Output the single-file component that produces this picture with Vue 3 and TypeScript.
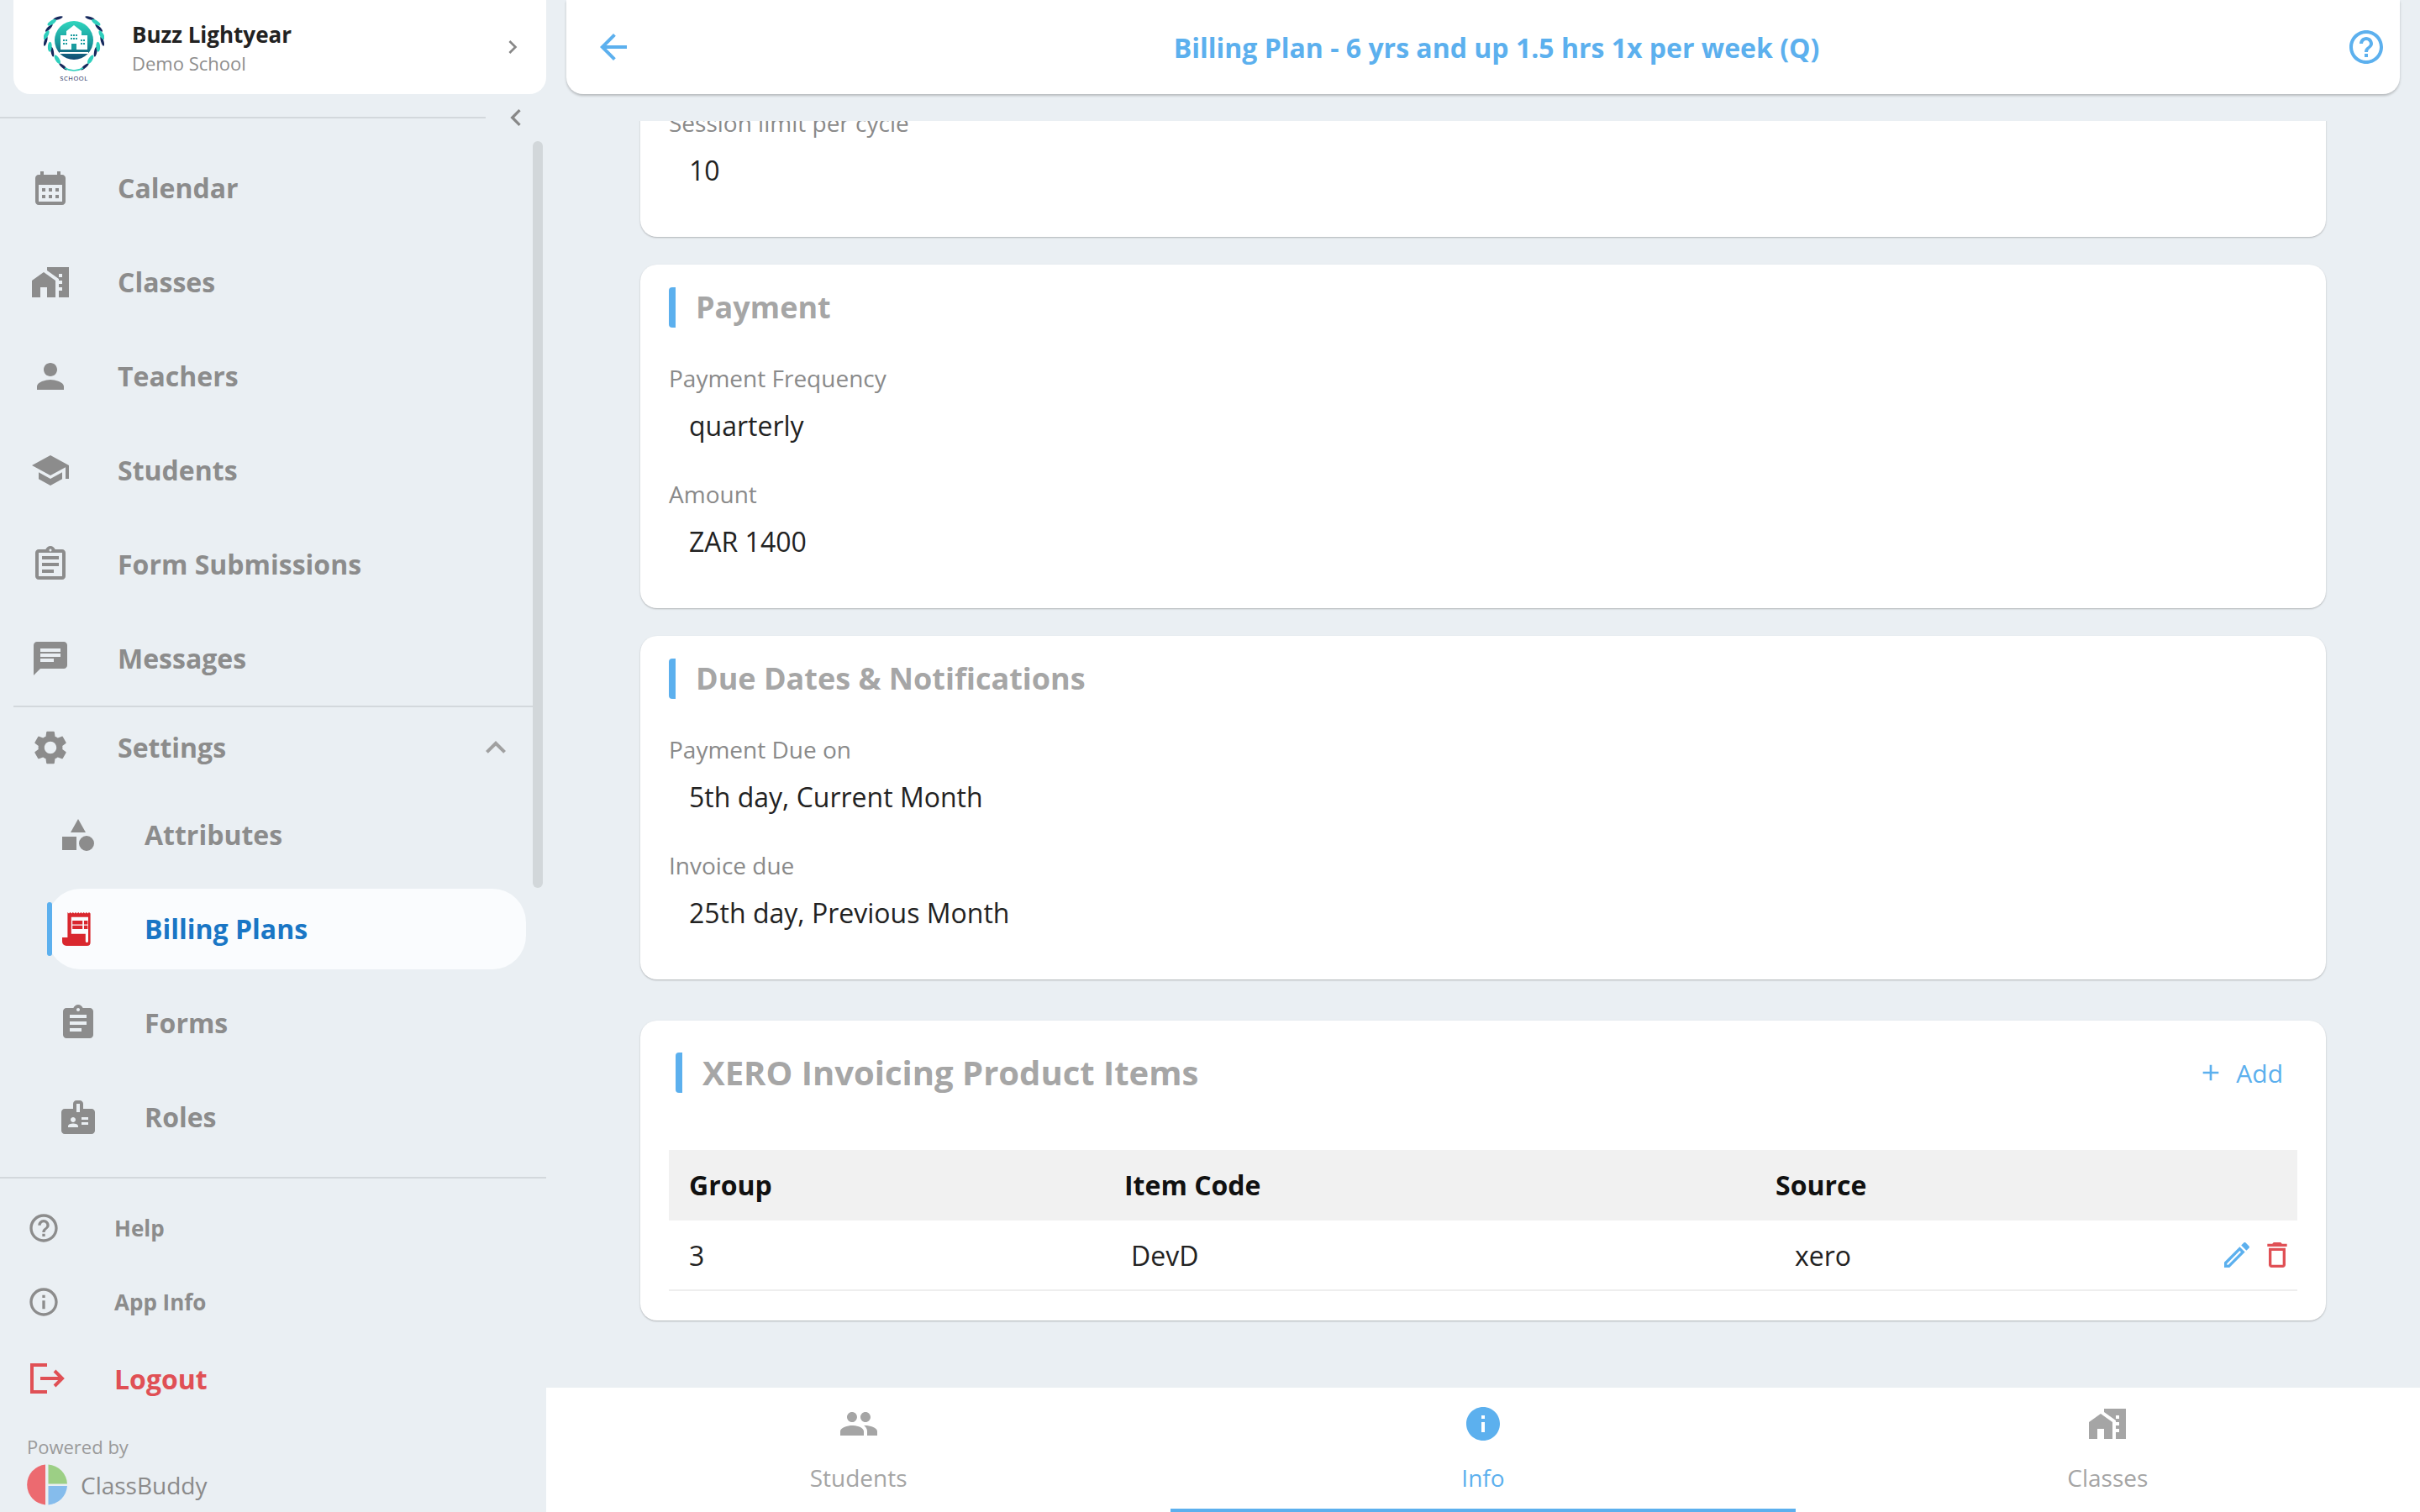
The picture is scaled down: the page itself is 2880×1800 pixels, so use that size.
<script setup lang="ts">
interface NavItem {
  label: string
  icon: string
  active?: boolean
}

const mainNav: NavItem[] = [
  { label: 'Calendar', icon: 'M19 4h-1V2h-2v2H8V2H6v2H5c-1.1 0-2 .9-2 2v14c0 1.1.9 2 2 2h14c1.1 0 2-.9 2-2V6c0-1.1-.9-2-2-2zm0 16H5V10h14v10zM9 14H7v-2h2v2zm4 0h-2v-2h2v2zm4 0h-2v-2h2v2zm-8 4H7v-2h2v2zm4 0h-2v-2h2v2zm4 0h-2v-2h2v2z' },
  { label: 'Classes', icon: 'M1 11v10h5v-6h4v6h5V11L8 6zM10 3v1.97l7 5V11h2v2h-2v2h2v2h-2v4h6V3H10zm9 6h-2V7h2v2z' },
  { label: 'Teachers', icon: 'M12 12c2.21 0 4-1.79 4-4s-1.79-4-4-4-4 1.79-4 4 1.79 4 4 4zm0 2c-2.67 0-8 1.34-8 4v2h16v-2c0-2.66-5.33-4-8-4z' },
  { label: 'Students', icon: 'M5 13.18v4L12 21l7-3.82v-4L12 17l-7-3.82zM12 3 1 9l11 6 9-4.91V17h2V9L12 3z' },
  { label: 'Form Submissions', icon: 'M19 3h-4.18C14.4 1.84 13.3 1 12 1s-2.4.84-2.82 2H5c-1.1 0-2 .9-2 2v14c0 1.1.9 2 2 2h14c1.1 0 2-.9 2-2V5c0-1.1-.9-2-2-2zm-7-.25c.41 0 .75.34.75.75s-.34.75-.75.75-.75-.34-.75-.75.34-.75.75-.75zM19 19H5V5h14v14zM7 15h7v2H7zM7 11h10v2H7zM7 7h10v2H7z' },
  { label: 'Messages', icon: 'M20 2H4c-1.1 0-1.99.9-1.99 2L2 22l4-4h14c1.1 0 2-.9 2-2V4c0-1.1-.9-2-2-2zM6 9h12v2H6V9zm8 5H6v-2h8v2zm4-6H6V6h12v2z' }
]

const settingsIcon = 'M19.14 12.94c.04-.3.06-.61.06-.94 0-.32-.02-.64-.07-.94l2.03-1.58c.18-.14.23-.41.12-.61l-1.92-3.32c-.12-.22-.37-.29-.59-.22l-2.39.96c-.5-.38-1.03-.7-1.62-.94l-.36-2.54c-.04-.24-.24-.41-.48-.41h-3.84c-.24 0-.43.17-.47.41l-.36 2.54c-.59.24-1.13.57-1.62.94l-2.39-.96c-.22-.08-.47 0-.59.22L2.74 8.87c-.12.21-.08.47.12.61l2.03 1.58c-.05.3-.09.63-.09.94s.02.64.07.94l-2.03 1.58c-.18.14-.23.41-.12.61l1.92 3.32c.12.22.37.29.59.22l2.39-.96c.5.38 1.03.7 1.62.94l.36 2.54c.05.24.24.41.48.41h3.84c.24 0 .44-.17.47-.41l.36-2.54c.59-.24 1.13-.56 1.62-.94l2.39.96c.22.08.47 0 .59-.22l1.92-3.32c.12-.22.07-.47-.12-.61l-2.01-1.58zM12 15.6c-1.98 0-3.6-1.62-3.6-3.6s1.62-3.6 3.6-3.6 3.6 1.62 3.6 3.6-1.62 3.6-3.6 3.6z'

const subNav: NavItem[] = [
  { label: 'Attributes', icon: 'M12 2.5 16.5 10.5H7.5zM2.5 13h8.5v8h-8.5zM17 12.5a4.5 4.5 0 1 0 0 9 4.5 4.5 0 0 0 0-9z' },
  {
    label: 'Billing Plans',
    active: true,
    icon: 'M5.7 2l.8.8.8-.8.8.8.8-.8.8.8.8-.8.8.8.8-.8.8.8.8-.8.8.8.8-.8.8.8.8-.8.8.8.8-.8.8.8V20a2 2 0 0 1-2 2H5a2.5 2.5 0 0 1-2.5-2.5V17h3.2zM7.9 4.9V14.9H16.4V19.2a.8.8 0 0 0 1.6 0V4.9zM8.6 7h6v2.3h-6zM15.5 7h2.2v2.3h-2.2zM8.6 9.9h6v2.1h-6zM15.5 9.9h2.2v2.1h-2.2z'
  },
  { label: 'Forms', icon: 'M19 3h-4.18C14.4 1.84 13.3 1 12 1c-1.3 0-2.4.84-2.82 2H5c-1.1 0-2 .9-2 2v14c0 1.1.9 2 2 2h14c1.1 0 2-.9 2-2V5c0-1.1-.9-2-2-2zm-7 0c.55 0 1 .45 1 1s-.45 1-1 1-1-.45-1-1 .45-1 1-1zm2 14H7v-2h7v2zm3-4H7v-2h10v2zm0-4H7V7h10v2z' },
  { label: 'Roles', icon: 'M20 7h-5V4c0-1.1-.9-2-2-2h-2c-1.1 0-2 .9-2 2v3H4c-1.1 0-2 .9-2 2v11c0 1.1.9 2 2 2h16c1.1 0 2-.9 2-2V9c0-1.1-.9-2-2-2zM9 12c.83 0 1.5.67 1.5 1.5S9.83 15 9 15s-1.5-.67-1.5-1.5S8.17 12 9 12zm3 6H6v-.43c0-.6.36-1.15.92-1.39.64-.28 1.34-.43 2.08-.43s1.44.15 2.08.43c.55.24.92.78.92 1.39V18zm1-9h-2V4h2v5zm5 7.5h-4V15h4v1.5zm0-3h-4V12h4v1.5z' }
]

const helpIcon = 'M11 18h2v-2h-2v2zm1-16C6.48 2 2 6.48 2 12s4.48 10 10 10 10-4.48 10-10S17.52 2 12 2zm0 18c-4.41 0-8-3.59-8-8s3.59-8 8-8 8 3.59 8 8-3.59 8-8 8zm0-14c-2.21 0-4 1.79-4 4h2c0-1.1.9-2 2-2s2 .9 2 2c0 2-3 1.75-3 5h2c0-2.25 3-2.5 3-5 0-2.21-1.79-4-4-4z'
const infoIcon = 'M11 7h2v2h-2zm0 4h2v6h-2zm1-9C6.48 2 2 6.48 2 12s4.48 10 10 10 10-4.48 10-10S17.52 2 12 2zm0 18c-4.41 0-8-3.59-8-8s3.59-8 8-8 8 3.59 8 8-3.59 8-8 8z'

const sections = [
  {
    title: 'Payment',
    fields: [
      { label: 'Payment Frequency', value: 'quarterly' },
      { label: 'Amount', value: 'ZAR 1400' }
    ]
  },
  {
    title: 'Due Dates & Notifications',
    fields: [
      { label: 'Payment Due on', value: '5th day, Current Month' },
      { label: 'Invoice due', value: '25th day, Previous Month' }
    ]
  }
]

const tabs = [
  { label: 'Students', icon: 'M16 11c1.66 0 2.99-1.34 2.99-3S17.66 5 16 5c-1.66 0-3 1.34-3 3s1.34 3 3 3zm-8 0c1.66 0 2.99-1.34 2.99-3S9.66 5 8 5C6.34 5 5 6.34 5 8s1.34 3 3 3zm0 2c-2.33 0-7 1.17-7 3.5V19h14v-2.5c0-2.33-4.67-3.5-7-3.5zm8 0c-.29 0-.62.02-.97.05 1.16.84 1.97 1.97 1.97 3.45V19h6v-2.5c0-2.33-4.67-3.5-7-3.5z', active: false },
  { label: 'Info', icon: 'M12 2C6.48 2 2 6.48 2 12s4.48 10 10 10 10-4.48 10-10S17.52 2 12 2zm1 15h-2v-6h2v6zm0-8h-2V7h2v2z', active: true },
  { label: 'Classes', icon: 'M1 11v10h5v-6h4v6h5V11L8 6zM10 3v1.97l7 5V11h2v2h-2v2h2v2h-2v4h6V3H10zm9 6h-2V7h2v2z', active: false }
]

// laurel leaves of the school crest: left side positions, mirrored for the right
const leafSpots: [number, number, string, number][] = [
  [17, 3.7, '#15285c', 1.7],
  [6.3, 15.3, '#15285c', 1.7],
  [2.3, 31, '#15285c', 1.7],
  [10.3, 43.7, '#15285c', 1.7],
  [23, 61.3, '#15285c', 1.7],
  [9.7, 8.7, '#2ecfbd', 2.4],
  [3, 23.7, '#2ecfbd', 2.4],
  [7.3, 37.7, '#2ecfbd', 2.4],
  [16.3, 52.7, '#2ecfbd', 2.4]
]

const leaves = leafSpots.flatMap(([x, y, fill, rx]) => {
  const deg = (Math.atan2(y - 30, x - 36) * 180) / Math.PI
  return [
    { cx: x, cy: y, rx, rot: deg + 18, fill },
    { cx: 72 - x, cy: y, rx, rot: 180 - deg - 18, fill }
  ]
})
</script>

<template>
  <div class="app">
    <aside class="sidebar">
      <div class="profile">
        <svg class="crest" width="72" height="80" viewBox="0 0 72 80">
          <defs>
            <linearGradient id="crest-fill" x1="0" y1="0" x2="0" y2="1">
              <stop offset="0" stop-color="#2fd6bd" />
              <stop offset="0.55" stop-color="#1b9c9f" />
              <stop offset="1" stop-color="#10476f" />
            </linearGradient>
          </defs>
          <ellipse
            v-for="(leaf, i) in leaves"
            :key="i"
            :cx="leaf.cx"
            :cy="leaf.cy"
            :rx="leaf.rx"
            ry="6"
            :fill="leaf.fill"
            :transform="`rotate(${leaf.rot} ${leaf.cx} ${leaf.cy})`"
          />
          <path d="M25 63q11 6 22 0" fill="none" stroke="#2ecfbd" stroke-width="1.6" />
          <circle cx="36" cy="30" r="23" fill="url(#crest-fill)" />
          <path d="M36 12 45 19V24H52V41H20V24H27V19ZM19 44H53V46H19Z" fill="#fff" />
          <path d="M32 23h2v2h-2zM35 23h2v2h-2zM38 23h2v2h-2zM32 27h2v2h-2zM35 27h2v2h-2zM38 27h2v2h-2zM23 29h2v2h-2zM26 29h2v2h-2zM23 33h2v2h-2zM26 33h2v2h-2zM44 29h2v2h-2zM47 29h2v2h-2zM44 33h2v2h-2zM47 33h2v2h-2zM33 34h6v7h-6z" fill="#1b9c9f" />
          <text x="36" y="78" class="crest-text" text-anchor="middle">SCHOOL</text>
        </svg>
        <div class="profile-text">
          <div class="profile-name">Buzz Lightyear</div>
          <div class="profile-school">Demo School</div>
        </div>
        <svg class="profile-arrow" viewBox="0 0 24 24"><path d="M10 6 8.59 7.41 13.17 12l-4.58 4.59L10 18l6-6z" /></svg>
      </div>

      <div class="collapse-row">
        <div class="collapse-line"></div>
        <svg class="collapse-icon" viewBox="0 0 24 24"><path d="M15.41 7.41 14 6l-6 6 6 6 1.41-1.41L10.83 12z" /></svg>
      </div>

      <nav class="nav">
        <a v-for="item in mainNav" :key="item.label" class="nav-row">
          <svg class="nav-icon" viewBox="0 0 24 24"><path :d="item.icon" /></svg>
          <span>{{ item.label }}</span>
        </a>
        <div class="nav-sep"></div>
        <a class="nav-row nav-row--group">
          <svg class="nav-icon" viewBox="0 0 24 24"><path :d="settingsIcon" /></svg>
          <span>Settings</span>
          <svg class="group-arrow" viewBox="0 0 24 24"><path d="M12 8l-6 6 1.41 1.41L12 10.83l4.59 4.58L18 14z" /></svg>
        </a>
        <a
          v-for="item in subNav"
          :key="item.label"
          class="sub-row"
          :class="{ 'sub-row--active': item.active }"
        >
          <svg class="nav-icon" viewBox="0 0 24 24"><path fill-rule="evenodd" :d="item.icon" /></svg>
          <span>{{ item.label }}</span>
        </a>
      </nav>

      <div class="thumb"></div>

      <footer class="side-foot">
        <a class="foot-row">
          <svg class="foot-icon" viewBox="0 0 24 24"><path :d="helpIcon" /></svg>
          <span>Help</span>
        </a>
        <a class="foot-row">
          <svg class="foot-icon" viewBox="0 0 24 24"><path :d="infoIcon" /></svg>
          <span>App Info</span>
        </a>
        <a class="foot-row foot-row--logout">
          <svg class="foot-icon foot-icon--line" viewBox="0 0 48 48">
            <path d="M24 7H6v32h18" />
            <path d="M16 23h26M33 14l9 9-9 9" />
          </svg>
          <span>Logout</span>
        </a>
        <div class="powered">Powered by</div>
        <div class="brand">
          <svg width="48" height="49" viewBox="0 0 48 48">
            <path d="M22 .1A24 24 0 0 0 22 47.9Z" fill="#ec6a70" />
            <path d="M25.5 .1A24 24 0 0 1 48 23H25.5Z" fill="#9ccf85" />
            <path d="M25.5 25.5H48A24 24 0 0 1 25.5 47.9Z" fill="#85bcec" />
          </svg>
          <span>ClassBuddy</span>
        </div>
      </footer>
    </aside>

    <main class="main">
      <header class="topbar">
        <svg class="top-icon top-icon--back" viewBox="0 0 24 24"><path d="M20 11H7.83l5.59-5.59L12 4l-8 8 8 8 1.41-1.41L7.83 13H20v-2z" /></svg>
        <h1 class="title">Billing Plan - 6 yrs and up 1.5 hrs 1x per week (Q)</h1>
        <svg class="top-icon" viewBox="0 0 24 24"><path :d="helpIcon" /></svg>
      </header>

      <section class="content">
        <div class="card card--scrolled">
          <div class="field">
            <div class="field-label">Session limit per cycle</div>
            <div class="field-value">10</div>
          </div>
        </div>

        <div v-for="section in sections" :key="section.title" class="card">
          <h2 class="card-title">{{ section.title }}</h2>
          <div v-for="field in section.fields" :key="field.label" class="field">
            <div class="field-label">{{ field.label }}</div>
            <div class="field-value">{{ field.value }}</div>
          </div>
        </div>

        <div class="card card--table">
          <div class="table-head">
            <h2 class="card-title card-title--large">XERO Invoicing Product Items</h2>
            <a class="add-btn">
              <svg viewBox="0 0 24 24"><path d="M19 13h-6v6h-2v-6H5v-2h6V5h2v6h6v2z" /></svg>
              <span>Add</span>
            </a>
          </div>
          <div class="grid grid--head">
            <div class="cell-group">Group</div>
            <div class="cell-code">Item Code</div>
            <div class="cell-source">Source</div>
          </div>
          <div class="grid grid--row">
            <div class="cell-group">3</div>
            <div class="cell-code">DevD</div>
            <div class="cell-source">xero</div>
            <div class="cell-actions">
              <svg class="act-icon act-icon--edit" viewBox="0 0 24 24"><path d="M14.06 9.02l.92.92L5.92 19H5v-.92l9.06-9.06M17.66 3c-.25 0-.51.1-.7.29l-1.83 1.83 3.75 3.75 1.83-1.83c.39-.39.39-1.02 0-1.41l-2.34-2.34c-.2-.2-.45-.29-.71-.29zm-3.6 3.19L3 17.25V21h3.75L17.81 9.94l-3.75-3.75z" /></svg>
              <svg class="act-icon act-icon--del" viewBox="0 0 24 24"><path d="M6 19c0 1.1.9 2 2 2h8c1.1 0 2-.9 2-2V7H6v12zM8 9h8v10H8V9zm7.5-5l-1-1h-5l-1 1H5v2h14V4h-3.5z" /></svg>
            </div>
          </div>
        </div>
      </section>

      <div class="tabbar">
        <a v-for="tab in tabs" :key="tab.label" class="tab" :class="{ 'tab--active': tab.active }">
          <svg viewBox="0 0 24 24"><path :d="tab.icon" /></svg>
          <span>{{ tab.label }}</span>
        </a>
      </div>
    </main>
  </div>
</template>

<style>
html,
body {
  margin: 0;
  background: #eaeff3;
}
</style>

<style scoped>
.app {
  display: flex;
  width: 2880px;
  height: 1800px;
  overflow: hidden;
  background: #eaeff3;
  font-family: 'Open Sans', 'Noto Sans', sans-serif;
}

/* sidebar */
.sidebar {
  position: relative;
  display: flex;
  flex-direction: column;
  flex: 0 0 650px;
  height: 1800px;
}

.profile {
  display: flex;
  align-items: center;
  height: 112px;
  margin-left: 16px;
  padding-left: 36px;
  background: #fff;
  border-radius: 0 0 20px 20px;
}

.crest {
  flex: none;
  margin-top: 4px;
}

.crest-text {
  font-size: 7.5px;
  letter-spacing: 0.6px;
  fill: #15285c;
}

.profile-text {
  flex: 1;
  margin-left: 33px;
}

.profile-name {
  margin-top: 1px;
  font-size: 26px;
  font-weight: 700;
  line-height: 36px;
  color: #222;
}

.profile-school {
  font-size: 22px;
  line-height: 32px;
  color: #8e8e8e;
}

.profile-arrow {
  flex: none;
  width: 32px;
  height: 32px;
  margin-right: 24px;
  fill: #888;
}

.collapse-row {
  display: flex;
  align-items: center;
  height: 56px;
}

.collapse-line {
  width: 578px;
  height: 2px;
  background: #d3d8dc;
}

.collapse-icon {
  width: 40px;
  height: 40px;
  margin-left: 16px;
  fill: #888;
}

.nav {
  display: flex;
  flex-direction: column;
  height: 1233px;
}

.nav-row {
  display: flex;
  align-items: center;
  flex: none;
  height: 112px;
  padding-left: 36px;
  font-size: 32px;
  font-weight: 700;
  color: #8c8c8c;
}

.nav-row span,
.sub-row span {
  margin-top: -2px;
}

.nav-row--group {
  height: 96px;
  margin-right: 36px;
}

.nav-icon {
  flex: none;
  width: 48px;
  height: 48px;
  margin-right: 56px;
  fill: #8c8c8c;
}

.group-arrow {
  width: 48px;
  height: 48px;
  margin-left: auto;
  fill: #a0a0a0;
}

.nav-sep {
  flex: none;
  height: 2px;
  width: 618px;
  margin-left: 16px;
  background: #d3d8dc;
}

.sub-row {
  position: relative;
  display: flex;
  align-items: center;
  flex: none;
  width: 570px;
  height: 96px;
  margin: 8px 0 8px 56px;
  padding-left: 13px;
  box-sizing: border-box;
  font-size: 32px;
  font-weight: 700;
  color: #8c8c8c;
}

.sub-row .nav-icon {
  margin-right: 55px;
}

.sub-row--active {
  background: #fafcfe;
  border-radius: 40px;
  color: #1976c5;
}

.sub-row--active .nav-icon {
  fill: #d9272e;
}

.sub-row--active::before {
  content: '';
  position: absolute;
  left: 0;
  top: 16px;
  width: 6px;
  height: 64px;
  border-radius: 3px;
  background: #5cb0ee;
}

.thumb {
  position: absolute;
  left: 634px;
  top: 168px;
  width: 12px;
  height: 889px;
  border-radius: 6px;
  background: #d2d7da;
}

.side-foot {
  flex: 1;
  border-top: 2px solid #d3d8dc;
  padding-top: 15px;
}

.foot-row {
  display: flex;
  align-items: center;
  height: 88px;
  padding-left: 32px;
  font-size: 26px;
  font-weight: 700;
  color: #8c8c8c;
}

.foot-icon {
  flex: none;
  width: 40px;
  height: 40px;
  margin-right: 64px;
  fill: #8c8c8c;
}

.foot-icon--line {
  width: 48px;
  height: 48px;
  margin-right: 56px;
  fill: none;
  stroke: #e05055;
  stroke-width: 4px;
}

.foot-row--logout {
  height: 96px;
  font-size: 32px;
  color: #e05055;
}

.foot-row--logout span {
  margin-top: -2px;
}

.powered {
  margin: 16px 0 0 32px;
  font-size: 22px;
  line-height: 32px;
  color: #9a9a9a;
}

.brand {
  display: flex;
  align-items: center;
  margin: 5px 0 0 32px;
  font-size: 28px;
  color: #8a8a8a;
}

.brand span {
  margin-left: 16px;
}

/* main column */
.main {
  display: flex;
  flex-direction: column;
  flex: 1;
  min-width: 0;
  height: 1800px;
}

.topbar {
  display: flex;
  align-items: center;
  flex: none;
  height: 112px;
  margin: 0 24px;
  background: #fff;
  border-radius: 0 0 20px 20px;
  box-shadow: 0 2px 3px rgba(0, 0, 0, 0.22);
}

.top-icon {
  flex: none;
  width: 48px;
  height: 48px;
  margin-right: 16px;
  fill: #5cb0ee;
}

.top-icon--back {
  margin: 0 0 0 32px;
}

.title {
  flex: 1;
  margin: 0;
  padding-left: 16px;
  text-align: center;
  font-size: 32px;
  font-weight: 700;
  color: #5cb0ee;
}

.content {
  flex: 1;
  min-height: 0;
  margin-top: 32px;
  padding: 0 112px;
  overflow: hidden;
}

.card {
  padding: 27px 34px 54px;
  margin-bottom: 33px;
  background: #fff;
  border-radius: 20px;
  box-shadow: 0 1px 2px rgba(0, 0, 0, 0.25);
}

.card--scrolled {
  margin-top: -45px;
  margin-bottom: 33px;
}

.card-title {
  margin: 0 0 40px;
  height: 48px;
  padding-left: 24px;
  border-left: 8px solid #5cb0ee;
  border-radius: 4px;
  font-size: 36px;
  font-weight: 700;
  line-height: 48px;
  color: #a6a6a6;
}

.field {
  margin-bottom: 36px;
}

.field:last-child {
  margin-bottom: 0;
}

.field-label {
  font-size: 28px;
  line-height: 40px;
  color: #8a8a8a;
}

.field-value {
  margin-top: 12px;
  padding-left: 24px;
  font-size: 32px;
  line-height: 50px;
  color: #222;
}

.card--table {
  margin-top: 49px;
  padding: 38px 34px 35px;
}

.table-head {
  display: flex;
  align-items: center;
  justify-content: space-between;
  margin-bottom: 68px;
  padding: 0 17px 0 8px;
}

.card-title--large {
  margin: 0;
  font-size: 40px;
}

.add-btn {
  display: flex;
  align-items: center;
  gap: 14px;
  font-size: 30px;
  color: #5cb0ee;
}

.add-btn svg {
  width: 32px;
  height: 32px;
  fill: #5cb0ee;
}

.grid {
  display: grid;
  grid-template-columns: 520px 773px 1fr 120px;
  align-items: center;
  height: 84px;
}

.grid--head {
  padding-bottom: 2px;
  box-sizing: border-box;
  background: #f1f1f1;
  font-size: 32px;
  font-weight: 700;
  color: #111;
}

.grid--head .cell-code {
  padding-left: 22px;
}

.grid--head .cell-source {
  padding-left: 24px;
}

.grid--row {
  box-sizing: border-box;
  border-bottom: 2px solid #eeeeee;
  font-size: 32px;
  color: #222;
}

.grid--row .cell-code {
  padding-left: 30px;
}

.grid--row .cell-source {
  padding-left: 47px;
}

.cell-group {
  padding-left: 24px;
}

.cell-actions {
  display: flex;
  justify-content: flex-end;
  gap: 8px;
  padding-right: 4px;
}

.act-icon {
  width: 40px;
  height: 40px;
}

.act-icon--edit {
  fill: #5cb0ee;
}

.act-icon--del {
  fill: #e05055;
}

/* bottom tabs */
.tabbar {
  display: flex;
  flex: none;
  height: 148px;
  background: #fff;
}

.tab {
  display: flex;
  flex-direction: column;
  align-items: center;
  flex: 1;
  box-sizing: border-box;
  padding-top: 19px;
  border-bottom: 4px solid transparent;
  font-size: 28px;
  line-height: 40px;
  color: #a5a5a5;
}

.tab svg {
  width: 48px;
  height: 48px;
  margin-bottom: 20px;
  fill: #a5a5a5;
}

.tab--active {
  border-bottom-color: #5cb0ee;
  color: #5cb0ee;
}

.tab--active svg {
  fill: #5cb0ee;
}
</style>
